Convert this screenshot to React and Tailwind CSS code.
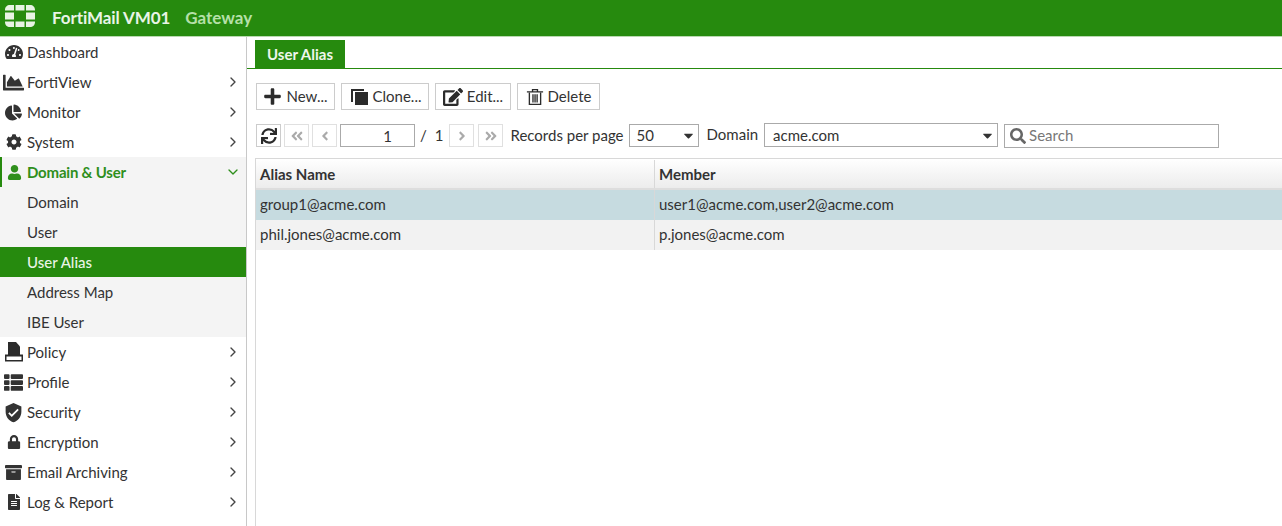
import React from 'react'
import {
  FaTachometerAlt, FaChartArea, FaChartPie, FaCog, FaUser, FaThList, FaLock, FaArchive, FaFileAlt,
  FaPlus, FaEdit, FaSync, FaSearch, FaAngleDoubleLeft, FaAngleDoubleRight,
  FaAngleLeft, FaAngleRight, FaCaretDown,
} from 'react-icons/fa'
import { MdVerifiedUser } from 'react-icons/md'
import { LuChevronRight, LuChevronDown } from 'react-icons/lu'

const Logo = () => (
  <svg width="30" height="22" viewBox="0 0 30 22" fill="#e8f3e4" className="-mt-[4px]">
    {/* top row */}
    <path d="M9 0H5C2 0 0 2 0 5v.500h9zM10.500 0h9v5.500h-9zM21 0h4c3 0 5 2 5 5v.500h-9z" />
    {/* middle row */}
    <path d="M0 7.500h9v7H0zM21 7.500h9v7h-9z" />
    {/* bottom row */}
    <path d="M9 22H5c-3 0-5-2-5-5v-.500h9zM10.500 16.500h9V22h-9zM21 22h4c3 0 5-2 5-5v-.500h-9z" />
  </svg>
)

const PolicyIcon = () => (
  <svg width="20" height="20" viewBox="0 0 20 20" fill="#2b2b2b">
    <path d="M4 0h8l4 4.500V13H4z" />
    <path d="M1 12.500h18V19.500H1z" />
    <path d="M2.500 14.500h15V18h-15z" fill="#fff" />
  </svg>
)

const TrashIcon = () => (
  <svg width="18" height="18" viewBox="0 0 18 20" fill="#2b2b2b">
    <path d="M0 3.500h18v1.500H0zM5.500 3.500V1h7v2.500h-1.500v-1H7v1z" />
    <path d="M2 5h1.500v12.500h11V5H16v14H2z" />
    <path d="M6 7h1.500v9H6zM8.300 7h1.500v9H8.300zM10.600 7h1.500v9h-1.500z" />
  </svg>
)

const menu = [
  { label: 'Dashboard', icon: <FaTachometerAlt size={18} /> },
  { label: 'FortiView', icon: <FaChartArea size={21} />, arrow: true },
  { label: 'Monitor', icon: <FaChartPie size={17} />, arrow: true },
  { label: 'System', icon: <FaCog size={16} />, arrow: true },
]

const menuBottom = [
  { label: 'Policy', icon: <PolicyIcon /> },
  { label: 'Profile', icon: <FaThList size={19} /> },
  { label: 'Security', icon: <MdVerifiedUser size={21} /> },
  { label: 'Encryption', icon: <FaLock size={14} /> },
  { label: 'Email Archiving', icon: <FaArchive size={17} /> },
  { label: 'Log & Report', icon: <FaFileAlt size={16} /> },
]

const MenuItem = ({ label, icon, arrow = true }) => (
  <div className="h-[30px] flex items-center text-[#333333]">
    <div className="w-[27px] flex justify-center shrink-0">{icon}</div>
    <span className="flex-1">{label}</span>
    {arrow && <LuChevronRight size={16} className="mr-[5px] text-[#444444]" />}
  </div>
)

const ToolButton = ({ icon, label, className }) => (
  <button className={`h-[27px] flex items-center justify-center gap-[4px] border border-[#cccccc] text-[#333333] bg-white ${className}`}>
    {icon}
    {label}
  </button>
)

const PageButton = ({ children }) => (
  <div className="w-[25px] h-[23px] flex items-center justify-center border border-[#e0e0e0] text-[#aaaaaa]">
    {children}
  </div>
)

const App = () => {
  return (
    <div className="w-[1282px] h-[526px] overflow-hidden bg-white text-[15px] text-[#333333] font-['Lato',sans-serif]">
      {/* Header */}
      <header className="h-[37px] bg-[#268a0e] flex items-center pl-[5px] border-b border-[#b9d9b0]">
        <Logo />
        <span className="ml-[17px] font-bold text-[#e9f4e6] text-[17px] tracking-[-0.1px]">FortiMail VM01</span>
        <span className="ml-[15px] font-bold text-[#b5e0a8] text-[17px]">Gateway</span>
      </header>

      <div className="flex h-[489px]">
        {/* Sidebar */}
        <aside className="w-[247px] shrink-0 border-r border-[#c8c8c8]">
          {menu.map((m, i) => (
            <MenuItem key={m.label} label={m.label} icon={m.icon} arrow={i > 0} />
          ))}
          <div className="bg-[#f4f4f4]">
            <div className="h-[30px] flex items-center border-l-2 border-[#268a0e] text-[#2f8f1c] font-bold">
              <div className="w-[25px] flex justify-center shrink-0"><FaUser size={15} /></div>
              <span className="flex-1 tracking-[-0.2px]">Domain &amp; User</span>
              <LuChevronDown size={16} className="mr-[5px]" />
            </div>
            <div className="h-[30px] pl-[27px] flex items-center">Domain</div>
            <div className="h-[30px] pl-[27px] flex items-center">User</div>
            <div className="h-[30px] pl-[27px] flex items-center bg-[#268a0e] text-[#e9f4e6] font-medium">User Alias</div>
            <div className="h-[30px] pl-[27px] flex items-center">Address Map</div>
            <div className="h-[30px] pl-[27px] flex items-center">IBE User</div>
          </div>
          {menuBottom.map((m) => (
            <MenuItem key={m.label} label={m.label} icon={m.icon} />
          ))}
        </aside>

        {/* Content */}
        <main className="flex-1 min-w-0 pt-[3px]">
          <div className="h-[29px] border-b border-[#268a0e] pl-[8px]">
            <div className="w-[90px] h-[28px] bg-[#268a0e] text-[#eef6ec] font-bold flex items-center justify-center">User Alias</div>
          </div>

          {/* Toolbar */}
          <div className="flex gap-[6px] pl-[9px] mt-[14px]">
            <ToolButton className="w-[79px]" icon={<FaPlus size={19} className="text-[#2b2b2b]" />} label="New..." />
            <ToolButton
              className="w-[88px] pl-[2px]"
              icon={
                <svg width="18" height="18" viewBox="0 0 18 18" fill="#2b2b2b">
                  <path d="M0 1h13v2H2v11H0z" />
                  <path d="M4 4h13v13H4z" />
                </svg>
              }
              label="Clone..."
            />
            <ToolButton className="w-[76px]" icon={<FaEdit size={20} className="text-[#2b2b2b]" />} label="Edit..." />
            <ToolButton className="w-[83px]" icon={<TrashIcon />} label="Delete" />
          </div>

          {/* Pager row */}
          <div className="flex items-center pl-[9px] mt-[13px] h-[25px]">
            <div className="w-[25px] h-[23px] flex items-center justify-center border border-[#cccccc] text-[#2b2b2b]">
              <FaSync size={16} />
            </div>
            <div className="flex gap-[3px] ml-[3px]">
              <PageButton><FaAngleDoubleLeft size={14} /></PageButton>
              <PageButton><FaAngleLeft size={14} /></PageButton>
            </div>
            <input readOnly value="1" className="w-[75px] h-[23px] ml-[3px] pl-[20px] border border-[#aaaaaa] text-center outline-none" />
            <span className="ml-[5px]">/</span>
            <span className="ml-[8px]">1</span>
            <div className="flex gap-[4px] ml-[6px]">
              <PageButton><FaAngleRight size={14} /></PageButton>
              <PageButton><FaAngleDoubleRight size={14} /></PageButton>
            </div>
            <span className="ml-[7px]">Records per page</span>
            <div className="w-[70px] h-[23px] ml-[5px] border border-[#aaaaaa] flex items-center justify-between pl-[7px] pr-[2px]">
              50 <FaCaretDown size={15} />
            </div>
            <span className="ml-[8px] -mt-[3px]">Domain</span>
            <div className="w-[234px] h-[24px] ml-[6px] border border-[#aaaaaa] flex items-center justify-between pl-[8px] pr-[2px] -mt-[1px]">
              acme.com <FaCaretDown size={15} />
            </div>
            <div className="w-[215px] h-[24px] ml-[6px] border border-[#aaaaaa] flex items-center pl-[5px] text-[#777777]">
              <FaSearch size={16} className="mr-[3px] text-[#666666]" />
              Search
            </div>
          </div>

          {/* Table */}
          <div className="ml-[8px] mt-[10px] border-l border-t border-[#d8d8d8] h-[377px]">
            <div className="flex h-[31px] pt-[1px] font-bold bg-gradient-to-b from-white to-[#ececec] border-b-2 border-[#dddddd] text-[#333333]">
              <div className="w-[399px] flex items-center pl-[4px] border-r border-[#d8d8d8]">Alias Name</div>
              <div className="flex-1 flex items-center pl-[4px]">Member</div>
            </div>
            <div className="flex h-[30px] bg-[#c6dbe0]">
              <div className="w-[399px] flex items-center pl-[4px] pb-[2px] border-r border-[#d8d8d8]">group1@acme.com</div>
              <div className="flex-1 flex items-center pl-[4px] pb-[2px]">user1@acme.com,user2@acme.com</div>
            </div>
            <div className="flex h-[30px] bg-[#f2f2f2]">
              <div className="w-[399px] flex items-center pl-[4px] pb-[2px] border-r border-[#d8d8d8]">phil.jones@acme.com</div>
              <div className="flex-1 flex items-center pl-[4px] pb-[2px]">p.jones@acme.com</div>
            </div>
          </div>
        </main>
      </div>
    </div>
  )
}

export default App
